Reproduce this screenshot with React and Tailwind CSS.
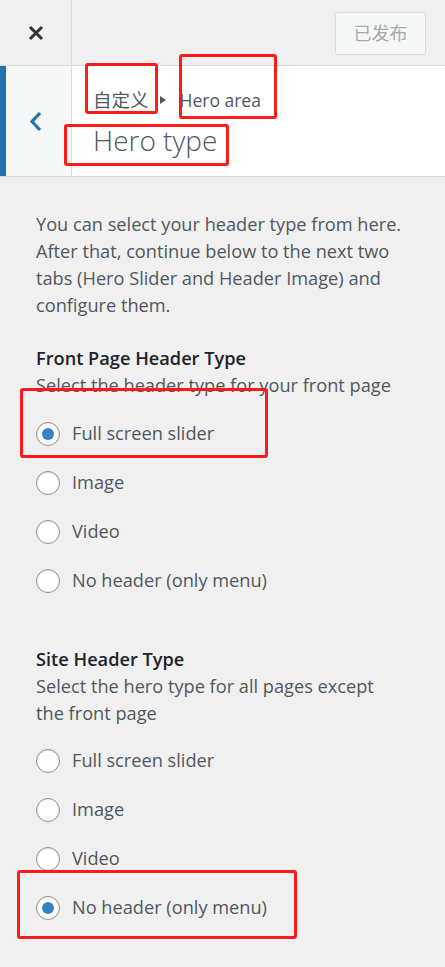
import React from 'react';

const FONT = { fontFamily: '"Open Sans", "Noto Sans CJK SC", sans-serif' };

function Radio({ label, checked }) {
  return (
    <label className="flex items-center h-[49px] gap-[12px]">
      <span className="w-[24px] h-[24px] rounded-full border border-[#8c8f94] bg-white flex items-center justify-center shadow-[inset_0_1px_2px_rgba(0,0,0,0.1)]">
        {checked && <span className="w-[12px] h-[12px] rounded-full bg-[#3582c4]" />}
      </span>
      <span className="text-[18.2px] text-[#50575e]">{label}</span>
    </label>
  );
}

function RedBox({ className }) {
  return <div className={`absolute border-[3px] border-[#ff1a1a] rounded-[3px] pointer-events-none ${className}`} />;
}

const OPTIONS = ['Full screen slider', 'Image', 'Video', 'No header (only menu)'];

export default function App() {
  return (
    <div className="relative w-[445px] h-[967px] bg-[#f0f0f1] overflow-hidden" style={FONT}>
      {/* Top bar */}
      <div className="flex h-[66px] border-b border-[#dcdcde]">
        <div className="w-[72px] border-r border-[#dcdcde] flex items-center justify-center">
          <svg width="16" height="16" viewBox="0 0 16 16">
            <path d="M2 2 L14 14 M14 2 L2 14" stroke="#2c3338" strokeWidth="3" />
          </svg>
        </div>
        <div className="flex-1 flex items-start justify-end pt-[12px] pr-[19px]">
          <button className="w-[91px] h-[43px] rounded-[3px] border border-[#dcdcde] bg-[#f6f7f7] text-[18px] text-[#a7aaad]">
            已发布
          </button>
        </div>
      </div>

      {/* Section header */}
      <div className="flex h-[111px] bg-white border-b border-[#dcdcde]">
        <div className="w-[72px] bg-[#f6f7f7] border-l-[6px] border-[#2271b1] border-r border-r-[#dcdcde] flex items-center justify-center pr-[6px]">
          <svg width="13" height="21" viewBox="0 0 13 21">
            <path d="M11 2 L3 10.5 L11 19" stroke="#2271b1" strokeWidth="3.2" fill="none" />
          </svg>
        </div>
        <div className="flex-1 pl-[21px] pt-[20px]">
          <div className="flex items-center text-[17.5px] text-[#50575e] h-[28px]">
            <span className="text-[18.5px]">自定义</span>
            <svg className="ml-[11px] mr-[14px]" width="6" height="8" viewBox="0 0 6 8">
              <path d="M0 0 L6 4 L0 8 Z" fill="#50575e" />
            </svg>
            <span>Hero area</span>
          </div>
          <div className="text-[28px] font-light text-[#50575e] leading-[40px] mt-[6px]">Hero type</div>
        </div>
      </div>

      {/* Content */}
      <div className="px-[36px] pt-[34px]">
        <p className="text-[18.2px] leading-[27px] text-[#50575e]">
          You can select your header type from here. After that, continue below to the next two tabs (Hero Slider and Header Image) and configure them.
        </p>

        <div className="mt-[25px]">
          <h3 className="text-[18.2px] font-semibold text-[#1d2327] leading-[28px]">Front Page Header Type</h3>
          <p className="text-[18.2px] leading-[27px] text-[#50575e]">Select the header type for your front page</p>
          <div className="mt-[10px]">
            {OPTIONS.map((l, i) => (
              <Radio key={l} label={l} checked={i === 0} />
            ))}
          </div>
        </div>

        <div className="mt-[40px]">
          <h3 className="text-[18.2px] font-semibold text-[#1d2327] leading-[28px]">Site Header Type</h3>
          <p className="text-[18.2px] leading-[27px] text-[#50575e] max-w-[355px]">Select the hero type for all pages except the front page</p>
          <div className="mt-[9px]">
            {OPTIONS.map((l, i) => (
              <Radio key={l} label={l} checked={i === 3} />
            ))}
          </div>
        </div>
      </div>

      {/* Annotation boxes */}
      <RedBox className="left-[85px] top-[63px] w-[73px] h-[51px]" />
      <RedBox className="left-[179px] top-[54px] w-[98px] h-[65px]" />
      <RedBox className="left-[64px] top-[124px] w-[165px] h-[42px]" />
      <RedBox className="left-[20px] top-[388px] w-[248px] h-[70px]" />
      <RedBox className="left-[17px] top-[870px] w-[280px] h-[69px]" />
    </div>
  );
}
